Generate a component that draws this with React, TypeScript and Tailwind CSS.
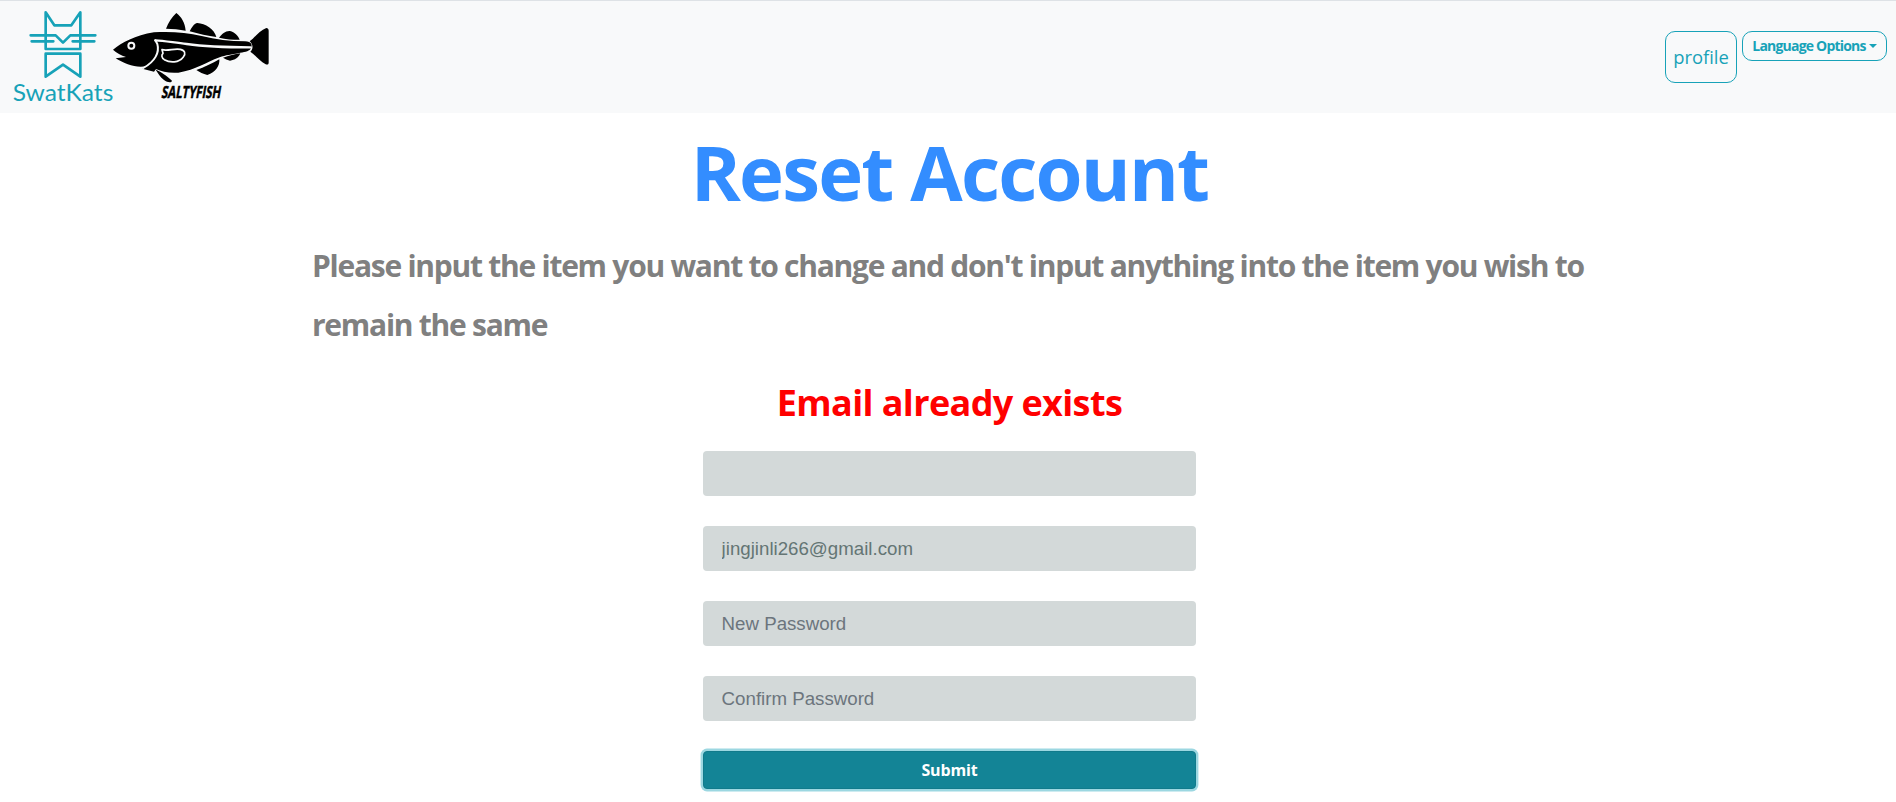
import React from "react";

function CatLogo() {
  return (
    <svg width="113" height="112" viewBox="0 3 339 336" className="shrink-0" aria-label="SwatKats">
      <g fill="none" stroke="#17a2b8" strokeWidth="8" strokeLinejoin="round" strokeLinecap="round">
        <path d="M137 147V37L163 76H214L241 37V147Z" />
        <path d="M137 161H241V230L189 194L137 230Z" />
        <path d="M92 106H167L189 128L211 106H286" />
        <path d="M95 124H160M218 124H283" />
      </g>
      <text x="38" y="302" fill="#17a2b8" fontSize="69" fontFamily="Lato, sans-serif" textLength="302" lengthAdjust="spacingAndGlyphs">
        SwatKats
      </text>
    </svg>
  );
}

function FishLogo() {
  return (
    <svg width="167" height="112" viewBox="24 3 501 336" className="shrink-0" aria-label="SaltyFish">
      <path d="M183 86C190 68 201 50 214 39C229 50 240 68 242 92C224 88 202 86 183 86Z" />
      <path d="M254 94C260 83 267 70 277 69C301 71 328 87 334 111C310 108 280 102 254 94Z" />
      <path d="M342 113C350 102 362 92 375 93C389 96 399 107 404 119C383 119 363 118 342 113Z" />
      <path d="M274 210C298 202 322 190 343 178C345 196 332 218 307 225C294 222 284 216 274 210Z" />
      <path d="M354 173C371 167 389 163 406 160C402 172 389 181 375 182C367 180 360 177 354 173Z" />
      <path d="M434 124C449 113 464 91 484 84C488 84 491 87 491 92V188C491 193 487 195 482 193C464 184 452 165 436 155C445 146 445 134 434 124Z" />
      <path d="M24 149C51 128 90 106 147 97C200 94 245 98 290 108C332 118 374 124 420 124C440 124 444 135 436 148C426 160 379 160 344 172C300 188 275 209 220 218C191 220 171 215 153 207L147 215L112 206L126 198C94 205 61 193 32 175L63 171C49 166 34 158 24 149Z" />
      <path d="M151 208C164 214 187 229 201 242C199 250 187 247 177 240C166 232 158 219 151 208Z" />
      <g fill="none" stroke="#f8f9fa" strokeLinecap="round" strokeLinejoin="round">
        <path strokeWidth="7" d="M151 121C178 122 207 128 245 132C300 140 365 142 437 142" />
        <path strokeWidth="6" d="M151 121L157 132C164 157 151 184 115 204" />
        <path strokeWidth="5" d="M171 149C190 154 207 144 226 148C240 151 243 161 235 171C222 189 195 189 178 179C169 173 169 165 174 160Z" />
        <circle cx="79" cy="137" r="9" strokeWidth="6" />
      </g>
      <text transform="translate(168 293) skewX(-10)" fontSize="50" fontWeight="700" fontFamily="'Open Sans', sans-serif" stroke="#000" strokeWidth="1.5" textLength="178" lengthAdjust="spacingAndGlyphs">
        SALTYFISH
      </text>
    </svg>
  );
}

function Field({ placeholder, tone }: { placeholder?: string; tone: string }) {
  return (
    <input
      placeholder={placeholder}
      className={`block h-[45px] w-full rounded bg-[#d3d9d9] px-[18.6px] font-['Liberation_Sans',Arial,sans-serif] text-[18.7px] outline-none ${tone}`}
    />
  );
}

export default function App() {
  return (
    <div className="h-[802px] overflow-hidden bg-white font-['Open_Sans',sans-serif]">
      <header className="flex h-[113px] items-start border-t border-[#dee2e6] bg-[#f8f9fa]">
        <CatLogo />
        <FishLogo />
        <nav className="mt-[30px] mr-[9px] ml-auto flex items-start gap-[5px]">
          <button className="h-[52px] w-[72px] rounded-[10px] border border-[#17a2b8] text-[18.4px] text-[#17a2b8]">
            profile
          </button>
          <button className="flex h-[30px] w-[145px] items-center justify-center rounded-[10px] border border-[#17a2b8] pb-[1px] text-[14px] font-bold tracking-[-0.8px] text-[#17a2b8]">
            <span>Language Options</span>
            <span className="ml-[3px] border-x-4 border-t-4 border-x-transparent border-t-[#17a2b8]" />
          </button>
        </nav>
      </header>
      <main className="flex flex-col">
        <h1 className="mt-[7px] pl-[3px] text-center text-[76px] leading-[104px] font-bold tracking-[-1.8px] text-[#338dff]">
          Reset Account
        </h1>
        <h3 className="mt-[12px] ml-[312px] w-[1290px] text-[30px] leading-[59px] font-bold tracking-[-1.26px] text-[#808080]">
          Please input the item you want to change and don't input anything into the item you wish to remain the same
        </h3>
        <form className="mt-[24px] ml-[703px] flex w-[493px] flex-col" onSubmit={(e) => e.preventDefault()}>
          <p className="text-center text-[36px] leading-[50px] font-bold tracking-[-0.62px] text-[#ff0000]">Email already exists</p>
          <div className="mt-[23px] flex flex-col gap-[30px]">
            <Field tone="placeholder:text-[#6c757d]" />
            <Field placeholder="jingjinli266@gmail.com" tone="placeholder:text-[#647574]" />
            <Field placeholder="New Password" tone="placeholder:text-[#6c757d]" />
            <Field placeholder="Confirm Password" tone="placeholder:text-[#6c757d]" />
          </div>
          <button className="mt-[30px] h-[38px] rounded border border-[#117a8b] bg-[#138496] text-[16px] font-bold tracking-[-0.15px] text-white shadow-[0_0_0_2.4px_rgba(58,176,195,0.5)]">
            Submit
          </button>
        </form>
      </main>
    </div>
  );
}
